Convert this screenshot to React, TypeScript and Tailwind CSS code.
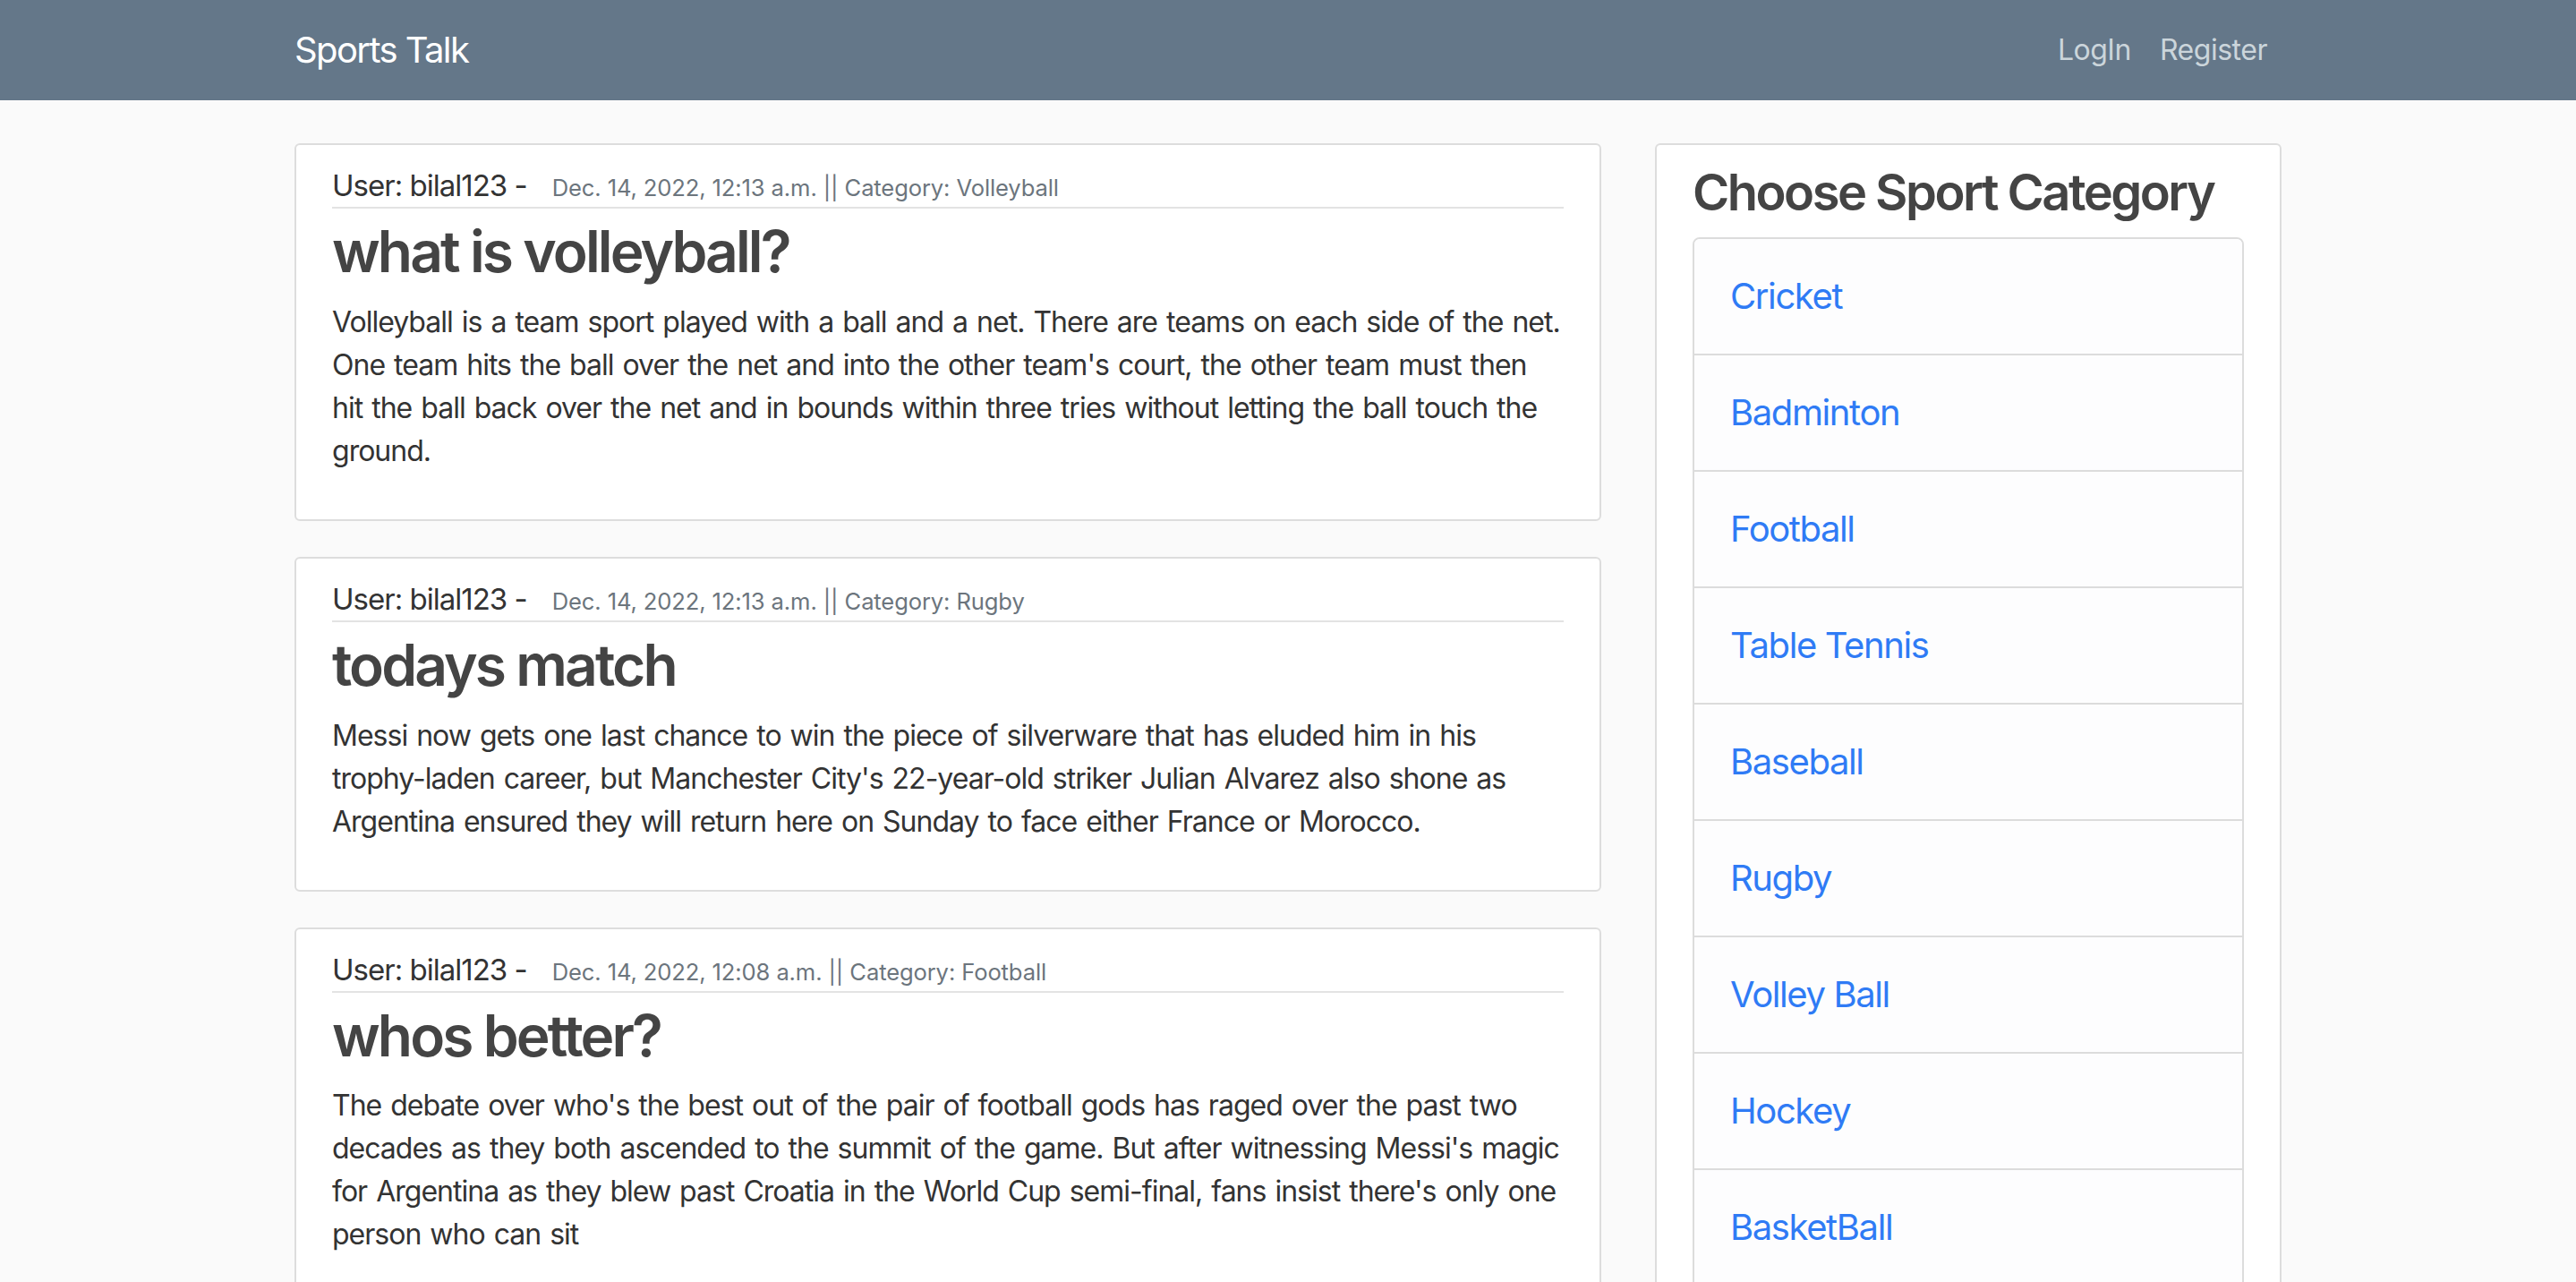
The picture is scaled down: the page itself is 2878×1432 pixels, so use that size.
import React from 'react';

interface Post {
  user: string;
  date: string;
  category: string;
  title: string;
  content: string;
}

const posts: Post[] = [
  {
    user: 'bilal123',
    date: 'Dec. 14, 2022, 12:13 a.m.',
    category: 'Volleyball',
    title: 'what is volleyball?',
    content:
      "Volleyball is a team sport played with a ball and a net. There are teams on each side of the net. One team hits the ball over the net and into the other team's court, the other team must then hit the ball back over the net and in bounds within three tries without letting the ball touch the ground.",
  },
  {
    user: 'bilal123',
    date: 'Dec. 14, 2022, 12:13 a.m.',
    category: 'Rugby',
    title: 'todays match',
    content:
      "Messi now gets one last chance to win the piece of silverware that has eluded him in his trophy-laden career, but Manchester City's 22-year-old striker Julian Alvarez also shone as Argentina ensured they will return here on Sunday to face either France or Morocco.",
  },
  {
    user: 'bilal123',
    date: 'Dec. 14, 2022, 12:08 a.m.',
    category: 'Football',
    title: 'whos better?',
    content:
      "The debate over who's the best out of the pair of football gods has raged over the past two decades as they both ascended to the summit of the game. But after witnessing Messi's magic for Argentina as they blew past Croatia in the World Cup semi-final, fans insist there's only one person who can sit",
  },
];

const categories = [
  'Cricket',
  'Badminton',
  'Football',
  'Table Tennis',
  'Baseball',
  'Rugby',
  'Volley Ball',
  'Hockey',
  'BasketBall',
  'Tennis',
];

const PostCard: React.FC<{ post: Post }> = ({ post }) => (
  <article className="bg-white border-2 border-[#dddddd] rounded-[6px] px-[40px] pt-[20px] pb-[20px] mb-[40px]">
    <div className="flex items-baseline gap-[28px] h-[51px] pt-[2px] border-b-2 border-[#e3e3e3]">
      <span className="text-[33px] leading-[46px] tracking-[-0.03em] text-[#333333]">
        User: {post.user} -
      </span>
      <small className="text-[25.6px] tracking-[-0.005em] text-[#6c757d]">
        {post.date} || Category: {post.category}
      </small>
    </div>
    <h2 className="mt-[10px] mb-[16px] text-[64px] leading-[1.2] font-semibold tracking-[-0.045em] text-[#444444]">
      {post.title}
    </h2>
    <p className="text-[32px] leading-[48px] tracking-[-0.031em] [word-spacing:2px] text-[#333333] mb-[32px]">
      {post.content}
    </p>
  </article>
);

export default function App() {
  return (
    <div
      className="min-h-screen bg-[#fafafa] text-[#333333]"
      style={{ fontFamily: 'Inter, "Noto Sans", sans-serif' }}
    >
      <header className="h-[112px] bg-[#647789]">
        <nav className="w-[2280px] mx-auto px-[30px] h-full flex items-center justify-between">
          <a className="text-[40px] leading-[60px] tracking-[-0.04em] text-white">Sports Talk</a>
          <div className="flex">
            <a className="px-[16px] py-[16px] text-[32px] leading-[48px] tracking-[-0.015em] text-[#cbd5db]">
              LogIn
            </a>
            <a className="px-[16px] py-[16px] text-[32px] leading-[48px] tracking-[-0.015em] text-[#cbd5db]">
              Register
            </a>
          </div>
        </nav>
      </header>

      <main className="w-[2280px] mx-auto px-[30px] pt-[48px]">
        <div className="grid grid-cols-[1460px_700px] gap-x-[60px] items-start">
          <div>
            {posts.map((post, i) => (
              <PostCard key={i} post={post} />
            ))}
          </div>
          <div className="bg-white border-2 border-[#dddddd] rounded-[6px] px-[40px] pt-[20px] pb-[20px] mb-[40px]">
            <h3 className="mb-[16px] text-[56px] leading-[1.2] font-semibold tracking-[-0.045em] whitespace-nowrap text-[#444444]">
              Choose Sport Category
            </h3>
            <ul className="border-2 border-[#dcdcdc] rounded-[8px] overflow-hidden">
              {categories.map((cat, i) => (
                <li
                  key={cat}
                  className={
                    'bg-[#fdfdfe] px-[40px] py-[40px] ' + (i > 0 ? 'border-t-2 border-[#dcdcdc]' : '')
                  }
                >
                  <a className="text-[40px] leading-[48px] tracking-[-0.035em] text-[#2f7bf5]">{cat}</a>
                </li>
              ))}
            </ul>
          </div>
        </div>
      </main>
    </div>
  );
}
